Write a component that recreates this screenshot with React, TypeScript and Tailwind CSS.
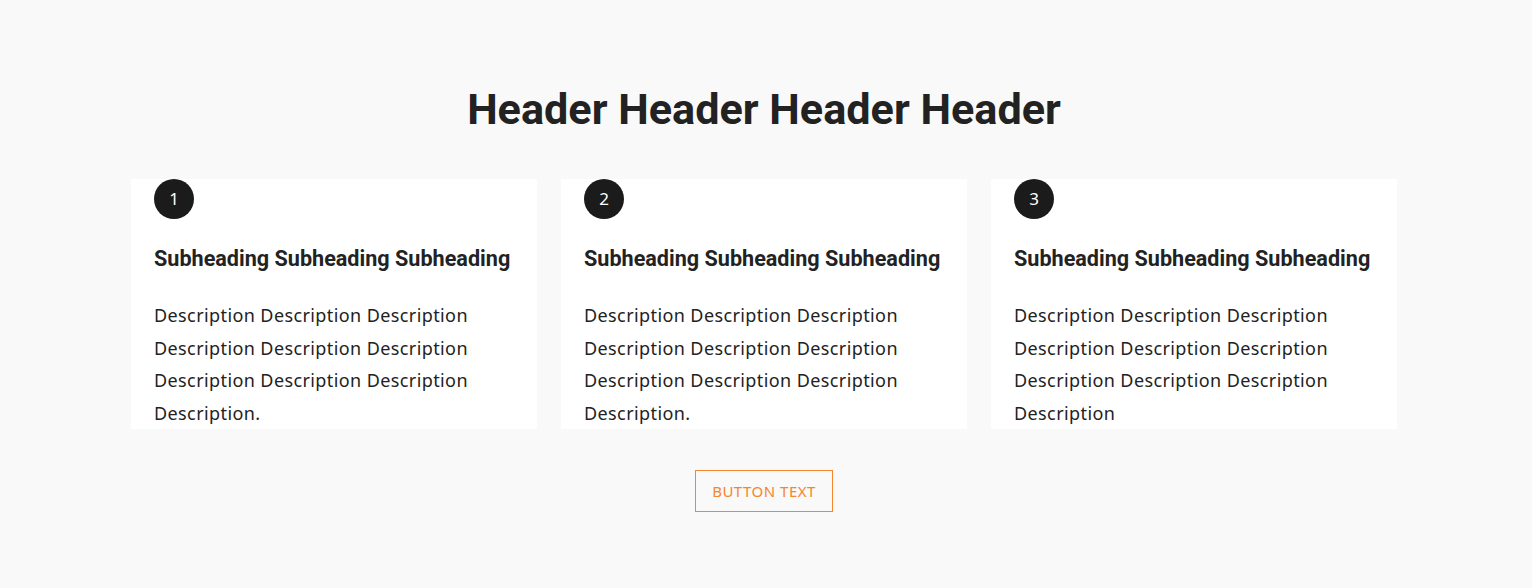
import React from "react";

const cards = [
  { n: "1", desc: "Description Description Description Description Description Description Description Description Description Description." },
  { n: "2", desc: "Description Description Description Description Description Description Description Description Description Description." },
  { n: "3", desc: "Description Description Description Description Description Description Description Description Description Description" },
];

export default function App() {
  return (
    <div className="min-h-[588px] w-full bg-[#f9f9f9] pr-[4px]">
      <div className="mx-auto flex w-[1266px] flex-col items-center pt-[86px] pb-[76px]">
        <h1 className="text-[43.2px] leading-[48px] font-bold text-[#222222] [font-family:Roboto,sans-serif]">
          Header Header Header Header
        </h1>
        <div className="mt-[45px] grid w-full grid-cols-3 gap-[24px]">
          {cards.map((c) => (
            <div key={c.n} className="flex h-[250px] flex-col bg-white px-[23px]">
              <div className="flex h-10 w-10 items-center justify-center rounded-full bg-[#1b1b1b] text-[17px] text-white [font-family:'Noto_Sans',sans-serif]">
                {c.n}
              </div>
              <h2 className="mt-[26px] text-[21.6px] leading-[28px] font-bold text-[#222222] [font-family:Roboto,sans-serif]">
                Subheading Subheading Subheading
              </h2>
              <p className="mt-[26px] text-[18px] leading-[32.5px] tracking-[0.4px] text-[#222222] [font-family:'Noto_Sans',sans-serif]">
                {c.desc}
              </p>
            </div>
          ))}
        </div>
        <button className="mt-[41px] h-[42px] w-[138px] border border-[#f5862b] text-[15px] tracking-[0.5px] text-[#f5862b] uppercase [font-family:'Noto_Sans',sans-serif]">
          Button Text
        </button>
      </div>
    </div>
  );
}
